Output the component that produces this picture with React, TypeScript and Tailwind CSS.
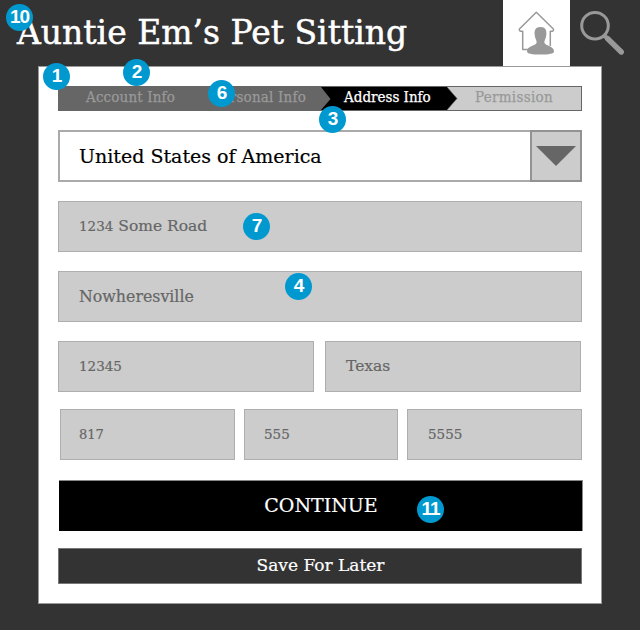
import React from "react";

const serif = "font-['DejaVu_Serif',serif]";
const condensed = "font-['DejaVu_Serif_Condensed','DejaVu_Serif',serif] [font-stretch:condensed]";

function Badge({ label, place }: { label: string; place: string }) {
  return (
    <span
      className={`absolute z-10 flex size-[27px] items-center justify-center rounded-full bg-[#0099cf] pb-[2px] font-['Liberation_Sans',sans-serif] text-[19px] leading-none font-bold tracking-[-1px] text-white ${place}`}
    >
      {label}
    </span>
  );
}

function Field({ children, size, text }: { children: React.ReactNode; size: string; text: string }) {
  return (
    <div className={`flex h-[51px] items-center border border-[#aeaeae] bg-[#cccccc] whitespace-nowrap text-[#666666] [-webkit-text-stroke:0.2px] ${size} ${text}`}>
      {children}
    </div>
  );
}

function HomeIcon() {
  return (
    <svg className="block h-[66px] w-[67px]" viewBox="503 0 67 66" fill="none">
      <path
        d="M532 49.5H522.7V31.2Q518.5 31.5 519.4 29L536.3 12.3L553.4 29Q554.3 31.5 550.3 31.2V46"
        stroke="#999999"
        strokeWidth="1.5"
        strokeLinejoin="round"
      />
      <path
        d="M540.5 27C545.5 27 546.8 30 546.3 35C546 38.5 544.6 40 544.3 42C544.5 46.3 554 45.4 554 51.5C554 53.7 549 54.6 540.5 54.6C532 54.6 527 53.7 527 51.5C527 45.4 536.5 46.3 536.7 42C536.4 40 535 38.5 534.7 35C534.2 30 535.5 27 540.5 27Z"
        fill="#999999"
      />
    </svg>
  );
}

function SearchIcon() {
  return (
    <svg className="ml-[9px] block h-[60px] w-[48px]" viewBox="579 0 48 60" fill="none" stroke="#999999">
      <circle cx="595" cy="25.7" r="13.3" strokeWidth="3" />
      <path d="M604 35.2L608 39" strokeWidth="4" />
      <path d="M607.5 38.5L621.3 52" strokeWidth="5.4" strokeLinecap="round" />
    </svg>
  );
}

export default function App() {
  return (
    <div className={`relative h-[630px] w-[640px] overflow-hidden bg-[#333333] ${serif}`}>
      <header className="flex h-[66px]">
        <h1 className="w-[503px] pt-[11px] pl-[17px] text-[33px] leading-[44px] whitespace-nowrap text-white [-webkit-text-stroke:0.5px]">
          Auntie Em’s Pet Sitting
        </h1>
        <div className="h-[66px] w-[67px] bg-white">
          <HomeIcon />
        </div>
        <SearchIcon />
      </header>

      <main className="ml-[38px] h-[538px] w-[564px] border border-[#999999] bg-white px-[19px] pt-[19px]">
        <nav className={`relative flex h-[25px] w-[524px] border border-[#666666] bg-[#cccccc] text-[15px] leading-[21px] whitespace-nowrap [-webkit-text-stroke:0.25px] ${condensed}`}>
          <div className="w-[262px] bg-[#666666] text-[#999999]">
            <div className="flex">
              <span className="w-[129px] pl-[27px] tracking-[0.15px]">Account Info</span>
              <span className="pl-[25px] tracking-[0.2px]">Personal Info</span>
            </div>
          </div>
          <div className="relative w-[137px] bg-black pl-[23px] text-white">
            <svg className="absolute top-0 left-0 h-[23px] w-[10px]" viewBox="0 0 10 23">
              <path d="M0 0L9.5 12L0 23Z" fill="#666666" />
            </svg>
            Address Info
            <svg className="absolute top-0 right-0 h-[23px] w-[11px]" viewBox="0 0 11 23">
              <path d="M0 0H11V23H0L10 11.5Z" fill="#cccccc" />
              <path d="M0 0L10 11.5L0 23" fill="none" stroke="#666666" strokeWidth="0.7" />
            </svg>
          </div>
          <span className="pl-[17px] tracking-[0.3px] text-[#999999]">Permission</span>
        </nav>

        <div className="mt-[19px] flex h-[52px] w-[524px] border-2 border-[#aaaaaa] text-[19px] text-black">
          <div className="flex w-[470px] items-center pl-[19px] whitespace-nowrap [-webkit-text-stroke:0.2px]">United States of America</div>
          <div className="-my-[2px] -mr-[2px] flex h-[52px] w-[52px] justify-center border-2 border-[#929292] bg-[#cccccc] pt-[14px]">
            <svg className="h-[20px] w-[40px]" viewBox="0 0 40 20">
              <path d="M0 0H40L20 20Z" fill="#666666" />
            </svg>
          </div>
        </div>

        <div className="mt-[19px] flex w-[524px] flex-col gap-[19px]">
          <Field size="w-[524px]" text="pl-[20px] text-[15.5px]">
            <span><span className="text-[13.5px]">1234</span> Some Road</span>
          </Field>
          <Field size="w-[524px]" text="pl-[20px] text-[15.8px]">Nowheresville</Field>
          <div className="flex gap-[11px]">
            <Field size="w-[256px]" text="pl-[20px] text-[13.5px]">12345</Field>
            <Field size="w-[256px]" text="pl-[20px] pt-[1px] text-[15.5px]">Texas</Field>
          </div>
        </div>

        <div className="mt-[17px] ml-[2px] flex gap-[9px]">
          <Field size="w-[175px]" text="pl-[18px] text-[13px]">817</Field>
          <Field size="w-[154px]" text="pl-[19px] text-[13.5px]">555</Field>
          <Field size="w-[175px]" text="pl-[20px] text-[13.5px]">5555</Field>
        </div>

        <button className="mt-[20px] ml-[1px] block h-[51px] w-[524px] border-t border-r border-[#888888] bg-black pb-[2px] pl-[1px] text-[19px] text-white [-webkit-text-stroke:0.2px]">
          CONTINUE
        </button>
        <button className="mt-[17px] block h-[36px] w-[524px] border border-[#777777] bg-[#333333] pl-px text-[17px] text-white [-webkit-text-stroke:0.2px]">
          Save For Later
        </button>
      </main>

      <Badge label="10" place="left-[6px] top-[4px]" />
      <Badge label="1" place="left-[43px] top-[63px]" />
      <Badge label="2" place="left-[123px] top-[59px]" />
      <Badge label="6" place="left-[208px] top-[80px]" />
      <Badge label="3" place="left-[319px] top-[106px]" />
      <Badge label="7" place="left-[243px] top-[213px]" />
      <Badge label="4" place="left-[285px] top-[273px]" />
      <Badge label="11" place="left-[417px] top-[496px]" />
    </div>
  );
}
